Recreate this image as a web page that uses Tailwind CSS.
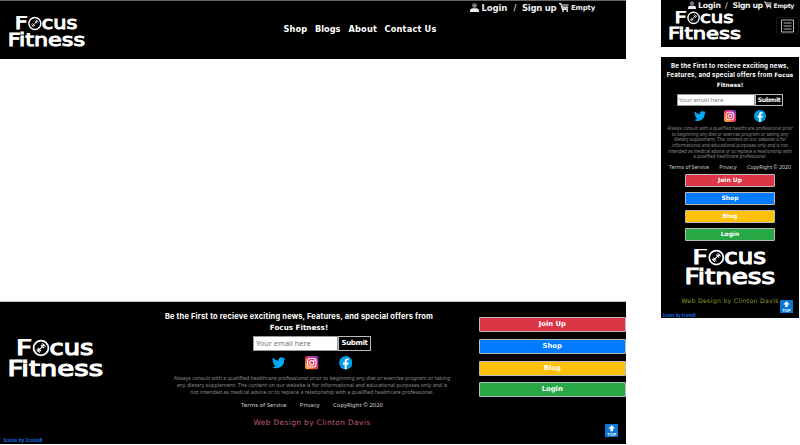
<!DOCTYPE html>
<html lang="en"><head><meta charset="utf-8"><title>Focus Fitness</title>
<script src="https://cdn.jsdelivr.net/npm/@tailwindcss/browser@4"></script></head>
<body class="w-[800px] h-[445px] overflow-hidden bg-white text-white font-['Noto_Sans',sans-serif]">
<svg class="absolute size-0">
<defs><linearGradient id="ig" x1="0" y1="1" x2="1" y2="0"><stop offset="0" stop-color="#ffd04a"/><stop offset=".35" stop-color="#f9523c"/><stop offset=".65" stop-color="#d42c86"/><stop offset="1" stop-color="#6848c8"/></linearGradient></defs>
<symbol id="logo" viewBox="0 0 94 38" overflow="visible">
<g fill="#fff" stroke="#fff" stroke-width="1.2" font-family="DejaVu Sans" font-size="21.5" font-weight="400">
<text x="7" y="16.3" textLength="16" lengthAdjust="spacingAndGlyphs">F</text>
<text x="40.5" y="16.3" textLength="44" lengthAdjust="spacingAndGlyphs">cus</text>
<text x="-1.5" y="37" textLength="95.5" lengthAdjust="spacingAndGlyphs">Fitness</text></g>
<circle cx="32" cy="9" r="7.4" fill="#000" stroke="#fff" stroke-width="1.8"/>
<path d="M28.5 12.5l7-7M27.5 10.3l3.2 3.2M28.8 9l3.2 3.2M33.3 4.5l3.2 3.2M31.8 5.8L35 9" stroke="#fff" stroke-width="1.1"/>
</symbol>
<symbol id="user" viewBox="0 0 9 9"><circle cx="4.5" cy="2.6" r="2.4" fill="#777"/><path d="M0 9V7.5Q0 5.5 2.5 5.3h4Q9 5.5 9 7.5V9z" fill="#eee"/></symbol>
<symbol id="cart" viewBox="0 0 10 9"><path d="M2.3 1h7.5L9 5H3.2z" fill="#777"/><path d="M0 .7h1.8l1.6 5.6h5.4M3 4.8h6" fill="none" stroke="#eee" stroke-width="1.2"/><circle cx="4" cy="8" r=".9" fill="#eee"/><circle cx="8.3" cy="8" r=".9" fill="#eee"/></symbol>
<symbol id="tw" viewBox="0 0 24 24"><path fill="#03a9f4" d="M24 4.6a10 10 0 0 1-2.8.8 5 5 0 0 0 2.1-2.7 10 10 0 0 1-3.1 1.2 4.9 4.9 0 0 0-8.4 4.5A14 14 0 0 1 1.7 3.1a4.9 4.9 0 0 0 1.5 6.6 5 5 0 0 1-2.2-.6v.1a4.9 4.9 0 0 0 3.9 4.8 5 5 0 0 1-2.2.1 4.9 4.9 0 0 0 4.6 3.4A10 10 0 0 1 0 19.5 14 14 0 0 0 21.5 7.1 10 10 0 0 0 24 4.6z"/></symbol>
<symbol id="insta" viewBox="0 0 24 24"><rect width="24" height="24" rx="5" fill="url(#ig)"/><rect x="4.5" y="4.5" width="15" height="15" rx="4.5" fill="none" stroke="#fff" stroke-width="1.8"/><circle cx="12" cy="12" r="3.8" fill="none" stroke="#fff" stroke-width="1.8"/><circle cx="16.4" cy="7.6" r="1.1" fill="#fff"/></symbol>
<symbol id="fb" viewBox="0 0 24 24"><circle cx="12" cy="12" r="12" fill="#039be5"/><path fill="#fff" d="M13.6 24v-8.8h3.1l.5-3.6h-3.6v-2c0-1 .4-1.9 1.8-1.9h1.9V4.5c-3.8-.7-7.2-.2-7.2 4.5v2.6H7v3.6h3.1V24z"/></symbol>
<symbol id="top" viewBox="0 0 13 13"><rect width="13" height="13" rx=".6" fill="#0c78d4"/><path d="M6.5 1.2L3.3 4.4h2v2.6h2.4V4.4h2z" fill="#fff"/><text x="6.5" y="11.6" font-size="4" font-weight="bold" font-family="Liberation Sans" text-anchor="middle" textLength="8.5" fill="#fff">TOP</text></symbol>
</svg>
<div class="flex gap-[35px] h-[445px]">
<main class="w-[626px] h-[444px] shrink-0 flex flex-col justify-between">
<header class="h-[59px] bg-black border-t border-[#666] flex justify-between font-['DejaVu_Sans'] font-bold">
<svg class="w-[76px] h-[31px] ml-[9px] mt-[15px]"><use href="#logo"/></svg>
<nav class="flex mt-[23px] ml-[172px] w-[160px] text-[8.2px] leading-[11px] whitespace-nowrap">
<a class="w-[31.5px] tracking-[.1px]">Shop</a><a class="w-[33.5px]">Blogs</a><a class="w-[36px] tracking-[.2px]">About</a><a class="tracking-[.2px]">Contact Us</a></nav>
<div class="flex mt-[1px] w-[156px] text-[8.5px] leading-[12px] whitespace-nowrap text-[#eee]"><svg class="w-[9px] h-[9px] mt-[1px] mr-[2.5px] shrink-0"><use href="#user"/></svg><span class="w-[32px] tracking-[-.1px]">Login</span><span class="w-[8.5px] font-normal">/</span><span class="w-[37px] tracking-[-.3px]">Sign up</span><svg class="w-[10px] h-[9px] mt-[1px] mr-[2px] shrink-0"><use href="#cart"/></svg><span class="text-[7px] leading-[13px] tracking-[-.2px]">Empty</span></div>
</header>
<footer class="relative h-[143px] w-[625.5px] bg-black border-t border-[#bbb] flex">
<svg class="w-[94px] h-[38px] ml-[9px] mt-[36.5px] shrink-0"><use href="#logo"/></svg>
<section class="w-[300px] ml-[59px] mt-[9px] flex flex-col items-center text-center whitespace-nowrap">
<h2 class="font-['Inter'] font-bold text-[7.5px] tracking-[.17px] leading-[11px] mr-[26px]">Be the First to recieve exciting news, Features, and special offers from</h2>
<div class="font-['DejaVu_Sans'] font-bold text-[7.2px] leading-[11px] mr-[26px]">Focus Fitness!</div>
<form class="flex h-[15px] mt-[3px] text-left"><div class="bg-white w-[85px] pl-[2px] border border-[#999] text-[#777] text-[7.4px] leading-[13px]">Your email here</div><div class="w-[33px] border border-[#bbb] text-center text-[7px] leading-[12px] font-bold font-['DejaVu_Sans'] tracking-[-.35px]">Submit</div></form>
<div class="flex gap-[20px] mt-[5px]"><svg class="size-[13.5px]"><use href="#tw"/></svg><svg class="size-[13.5px]"><use href="#insta"/></svg><svg class="size-[13.5px]"><use href="#fb"/></svg></div>
<p class="mt-[5px] text-[5.25px] leading-[7px] text-[#888]">Always consult with a qualified healthcare professional prior to beginning any diet or exercise program or taking<br>any dietary supplement. The content on our website is for informational and educational purposes only and is<br>not intended as medical advice or to replace a relationship with a qualified healthcare professional.</p>
<div class="flex w-[142px] mt-[5.5px] justify-between text-[6px] leading-[9px] text-[#ccc] tracking-[-.05px]"><span>Terms of Service</span><span>Privacy</span><span>CopyRight © 2020</span></div>
<div class="mt-[7.5px] font-['DejaVu_Sans'] text-[7.4px] tracking-[.38px] leading-[10px] text-[#c65a8c]">Web Design by Clinton Davis</div>
</section>
<aside class="ml-auto mt-[15px] w-[146.5px] flex flex-col gap-[6.8px] text-center text-[6.8px] leading-[12.5px] font-bold font-['DejaVu_Sans']">
<a class="h-[15px] border border-[#bbb] rounded-[1px] bg-[#dc3545]">Join Up</a><a class="h-[15px] border border-[#bbb] rounded-[1px] bg-[#007bff]">Shop</a><a class="h-[15px] border border-[#bbb] rounded-[1px] bg-[#ffc107]">Blog</a><a class="h-[15px] border border-[#bbb] rounded-[1px] bg-[#28a745]">Login</a></aside>
<a class="absolute left-[3.5px] bottom-0 text-[5.1px] leading-[8px] font-bold text-[#1268db]">Icons by Icons8</a>
<svg class="absolute left-[604.5px] top-[121.5px] size-[13.5px]"><use href="#top"/></svg>
</footer>
</main>
<div class="w-[139px] shrink-0">
<header class="relative h-[47px] bg-black font-['DejaVu_Sans'] font-bold">
<div class="flex pl-[27px] text-[7.8px] leading-[12px] whitespace-nowrap text-[#eee]"><svg class="w-[8px] h-[8px] mt-[1px] mr-[2px] shrink-0"><use href="#user"/></svg><span class="w-[27px] tracking-[-.3px]">Login</span><span class="w-[7.5px] font-normal">/</span><span class="w-[31.5px] tracking-[-.45px]">Sign up</span><svg class="w-[8px] h-[8px] mt-[1px] mr-[1.5px] shrink-0"><use href="#cart"/></svg><span class="text-[6.2px] leading-[12px] tracking-[-.3px]">Empty</span></div>
<div class="flex justify-between"><svg class="w-[72px] h-[29px] ml-[8px] -mt-[1px]"><use href="#logo"/></svg>
<div class="mt-[5px] mr-[1px] w-[23px] h-[17px] border border-[#181818] rounded-[2px] flex justify-center items-center"><svg class="w-[13px] h-[14px]" viewBox="0 0 13 14"><path d="M.5 1h12v12H.5zM2.5 4h8M2.5 7h8M2.5 10h8" fill="none" stroke="#ccc" stroke-width=".9"/></svg></div></div>
</header>
<footer class="relative mt-[10px] h-[261px] w-[138px] bg-black flex flex-col items-center text-center whitespace-nowrap pt-[4px]">
<h2 class="font-['Inter'] font-bold text-[6.2px] tracking-[.2px] leading-[9.2px]">Be the First to recieve exciting news,<br>Features, and special offers from <span class="font-['DejaVu_Sans'] text-[5.8px] tracking-[.05px]">Focus<br>Fitness!</span></h2>
<form class="flex h-[12.5px] mt-[3px] text-left"><div class="bg-white w-[78px] pl-[1px] border border-[#999] text-[#888] text-[6px] leading-[11px]">Your email here</div><div class="w-[28px] border border-[#bbb] text-center text-[6.2px] leading-[10.5px] font-bold font-['DejaVu_Sans'] tracking-[-.4px]">Submit</div></form>
<div class="flex gap-[18px] mt-[4px]"><svg class="size-[12px]"><use href="#tw"/></svg><svg class="size-[12px]"><use href="#insta"/></svg><svg class="size-[12px]"><use href="#fb"/></svg></div>
<p class="mt-[4px] text-[4.47px] leading-[5.65px] text-[#888]">Always consult with a qualified healthcare professional prior<br>to beginning any diet or exercise program or taking any<br>dietary supplement. The content on our website is for<br>informational and educational purposes only and is not<br>intended as medical advice or to replace a relationship with<br>a qualified healthcare professional.</p>
<div class="flex w-[122px] mt-[3px] justify-between text-[5.3px] leading-[9px] text-[#ccc] tracking-[-.05px]"><span>Terms of Service</span><span>Privacy</span><span>CopyRight © 2020</span></div>
<aside class="mt-[2px] w-[90px] flex flex-col gap-[5.4px] text-[6px] leading-[10.5px] font-bold font-['DejaVu_Sans']">
<a class="h-[12.7px] border border-[#bbb] rounded-[1px] bg-[#dc3545]">Join Up</a><a class="h-[12.7px] border border-[#bbb] rounded-[1px] bg-[#007bff]">Shop</a><a class="h-[12.7px] border border-[#bbb] rounded-[1px] bg-[#ffc107]">Blog</a><a class="h-[12.7px] border border-[#bbb] rounded-[1px] bg-[#28a745]">Login</a></aside>
<svg class="w-[89px] h-[36px] mt-[8px] shrink-0"><use href="#logo"/></svg>
<div class="mt-[11px] font-['DejaVu_Sans'] text-[6.2px] tracking-[.3px] leading-[9px] text-[#8d9e26]">Web Design by Clinton Davis</div>
<a class="absolute left-[2px] bottom-[0px] text-[4.3px] leading-[6px] font-bold text-[#1268db]">Icons by Icons8</a>
<svg class="absolute left-[119px] top-[242.5px] size-[13px]"><use href="#top"/></svg>
</footer>
</div>
</div>
</body></html>
